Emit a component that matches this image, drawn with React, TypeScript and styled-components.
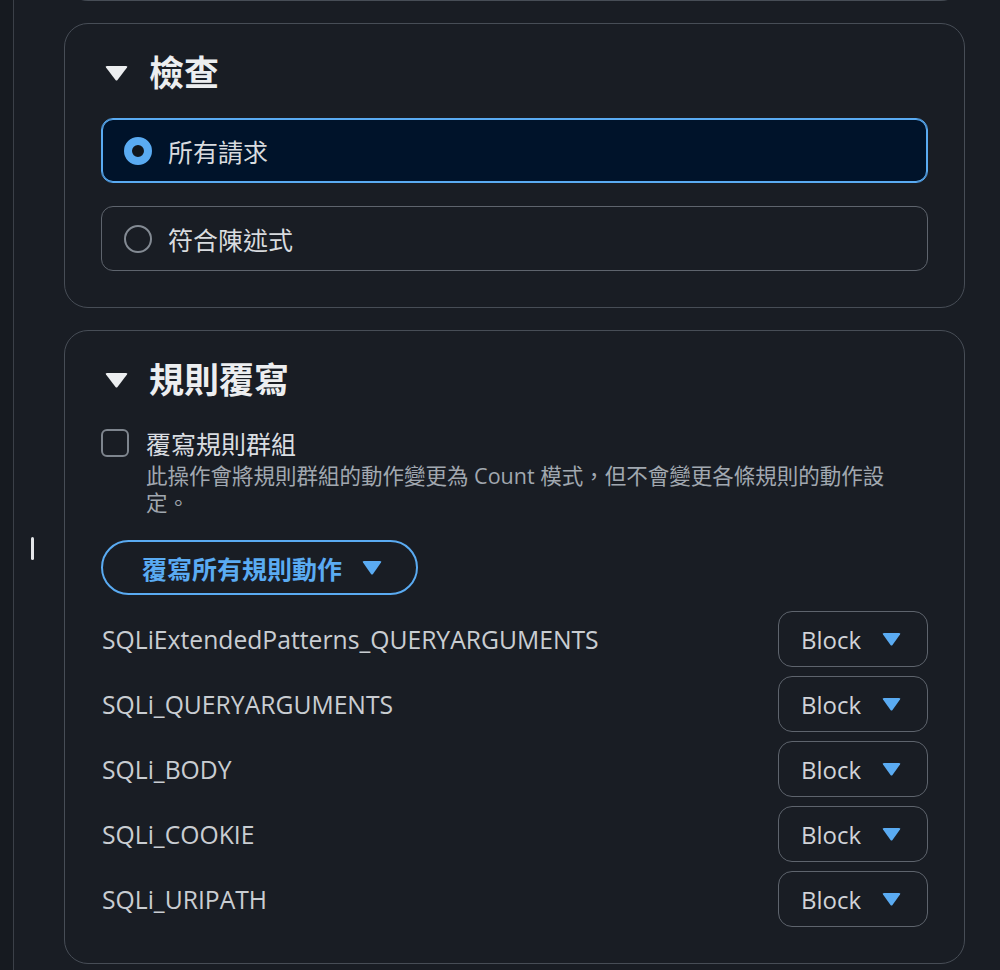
import React, { useState } from "react";
import styled, { createGlobalStyle } from "styled-components";

const GlobalStyle = createGlobalStyle`
  html, body { margin: 0; padding: 0; background: #191d24; }
  body {
    font-family: "Open Sans", "Noto Sans CJK TC", "Noto Sans", sans-serif;
    color: #d5d8dc;
  }
  * { box-sizing: border-box; }
`;

const Page = styled.div`
  display: flex;
  min-height: 970px;
  overflow: hidden;
`;

const SideStrip = styled.div`
  width: 14px;
  flex: none;
  background: #161a20;
  border-right: 1px solid #3b4048;
`;

const Gutter = styled.div`
  width: 50px;
  flex: none;
  display: flex;
  justify-content: flex-start;
  padding-top: 537px;
  padding-left: 17px;
`;

const Handle = styled.div`
  width: 3px;
  height: 23px;
  border-radius: 2px;
  background: #e3e5e8;
`;

const Main = styled.div`
  width: 901px;
  flex: none;
  display: flex;
  flex-direction: column;
  gap: 22px;
`;

const Card = styled.section`
  border: 1px solid #474d56;
  border-radius: 24px;
  padding: 27px 36px 36px;
  display: flex;
  flex-direction: column;
`;

const PrevCard = styled.div`
  height: 24px;
  margin-top: -23px;
  border: 1px solid #474d56;
  border-top: none;
  border-radius: 0 0 24px 24px;
`;

const Heading = styled.h2`
  margin: 0;
  display: flex;
  align-items: center;
  gap: 21px;
  height: 44px;
  padding-left: 4px;
  font-size: 35px;
  font-weight: 700;
  color: #eceef0;
  line-height: 44px;
`;

const Caret = styled.svg<{ $color: string }>`
  flex: none;
  fill: ${(p) => p.$color};
`;

const OptionList = styled.div`
  margin-top: 23px;
  display: flex;
  flex-direction: column;
  gap: 23px;
`;

const Option = styled.label<{ $selected: boolean }>`
  display: flex;
  align-items: center;
  gap: 16px;
  height: 65px;
  padding: 0 22px;
  border-radius: 12px;
  border: 1px solid ${(p) => (p.$selected ? "#5aabf2" : "#5e646d")};
  box-shadow: ${(p) => (p.$selected ? "inset 0 0 0 1px #5aabf2" : "none")};
  background: ${(p) => (p.$selected ? "#00132a" : "transparent")};
  font-size: 25px;
  color: #d8dbdf;
  cursor: pointer;
`;

const RadioDot = styled.span<{ $selected: boolean }>`
  flex: none;
  width: 28px;
  height: 28px;
  border-radius: 50%;
  border: ${(p) => (p.$selected ? "8px solid #5aabf2" : "2px solid #838a93")};
  background: ${(p) => (p.$selected ? "#11161d" : "transparent")};
`;

const CheckRow = styled.div`
  margin-top: 27px;
  display: flex;
  gap: 17px;
`;

const CheckBox = styled.span`
  flex: none;
  width: 28px;
  height: 28px;
  border: 2px solid #7e858e;
  border-radius: 6px;
`;

const CheckText = styled.div`
  display: flex;
  flex-direction: column;
  max-width: 768px;
`;

const CheckLabel = styled.div`
  font-size: 25px;
  line-height: 30px;
  color: #dadde1;
`;

const CheckDesc = styled.div`
  margin-top: 3px;
  font-size: 21.5px;
  line-height: 27px;
  color: #a1a8b0;
`;

const PillButton = styled.button`
  margin-top: 24px;
  align-self: flex-start;
  display: flex;
  align-items: center;
  gap: 20px;
  height: 55px;
  padding: 0 34px 0 39px;
  border: 2.5px solid #5aabf2;
  border-radius: 28px;
  background: transparent;
  color: #5aabf2;
  font-family: inherit;
  font-size: 25px;
  font-weight: 700;
`;

const RuleList = styled.div`
  margin-top: 16px;
  display: flex;
  flex-direction: column;
  gap: 9px;
`;

const RuleRow = styled.div`
  display: flex;
  align-items: center;
  justify-content: space-between;
  height: 56px;
`;

const RuleName = styled.span`
  font-size: 24.7px;
  color: #c9cdd2;
  padding-left: 1px;
`;

const Select = styled.button`
  width: 150px;
  height: 56px;
  display: flex;
  align-items: center;
  justify-content: space-between;
  padding: 0 26px 0 22px;
  border: 1px solid #5e646d;
  border-radius: 14px;
  background: transparent;
  color: #d0d3d8;
  font-family: inherit;
  font-size: 24px;
`;

const Triangle = ({ w, h, color }: { w: number; h: number; color: string }) => (
  <Caret $color={color} width={w} height={h} viewBox={`0 0 ${w} ${h}`}>
    <path d={`M1 1.5 Q0 0 2 0 L${w - 2} 0 Q${w} 0 ${w - 1} 1.5 L${w / 2 + 1} ${h - 1} Q${w / 2} ${h} ${w / 2 - 1} ${h - 1} Z`} />
  </Caret>
);

const rules = [
  "SQLiExtendedPatterns_QUERYARGUMENTS",
  "SQLi_QUERYARGUMENTS",
  "SQLi_BODY",
  "SQLi_COOKIE",
  "SQLi_URIPATH",
];

export default function App() {
  const [choice, setChoice] = useState(0);
  const options = ["所有請求", "符合陳述式"];
  return (
    <>
      <GlobalStyle />
      <Page>
        <SideStrip />
        <Gutter>
          <Handle />
        </Gutter>
        <Main>
          <PrevCard />
          <Card>
            <Heading>
              <Triangle w={23} h={15} color="#eceef0" />
              檢查
            </Heading>
            <OptionList>
              {options.map((o, i) => (
                <Option key={o} $selected={choice === i} onClick={() => setChoice(i)}>
                  <RadioDot $selected={choice === i} />
                  {o}
                </Option>
              ))}
            </OptionList>
          </Card>
          <Card>
            <Heading>
              <Triangle w={23} h={15} color="#eceef0" />
              規則覆寫
            </Heading>
            <CheckRow>
              <CheckBox />
              <CheckText>
                <CheckLabel>覆寫規則群組</CheckLabel>
                <CheckDesc>
                  此操作會將規則群組的動作變更為 Count 模式，但不會變更各條規則的動作設定。
                </CheckDesc>
              </CheckText>
            </CheckRow>
            <PillButton>
              覆寫所有規則動作
              <Triangle w={20} h={14} color="#5aabf2" />
            </PillButton>
            <RuleList>
              {rules.map((r) => (
                <RuleRow key={r}>
                  <RuleName>{r}</RuleName>
                  <Select>
                    Block
                    <Triangle w={19} h={13} color="#5aabf2" />
                  </Select>
                </RuleRow>
              ))}
            </RuleList>
          </Card>
        </Main>
      </Page>
    </>
  );
}
